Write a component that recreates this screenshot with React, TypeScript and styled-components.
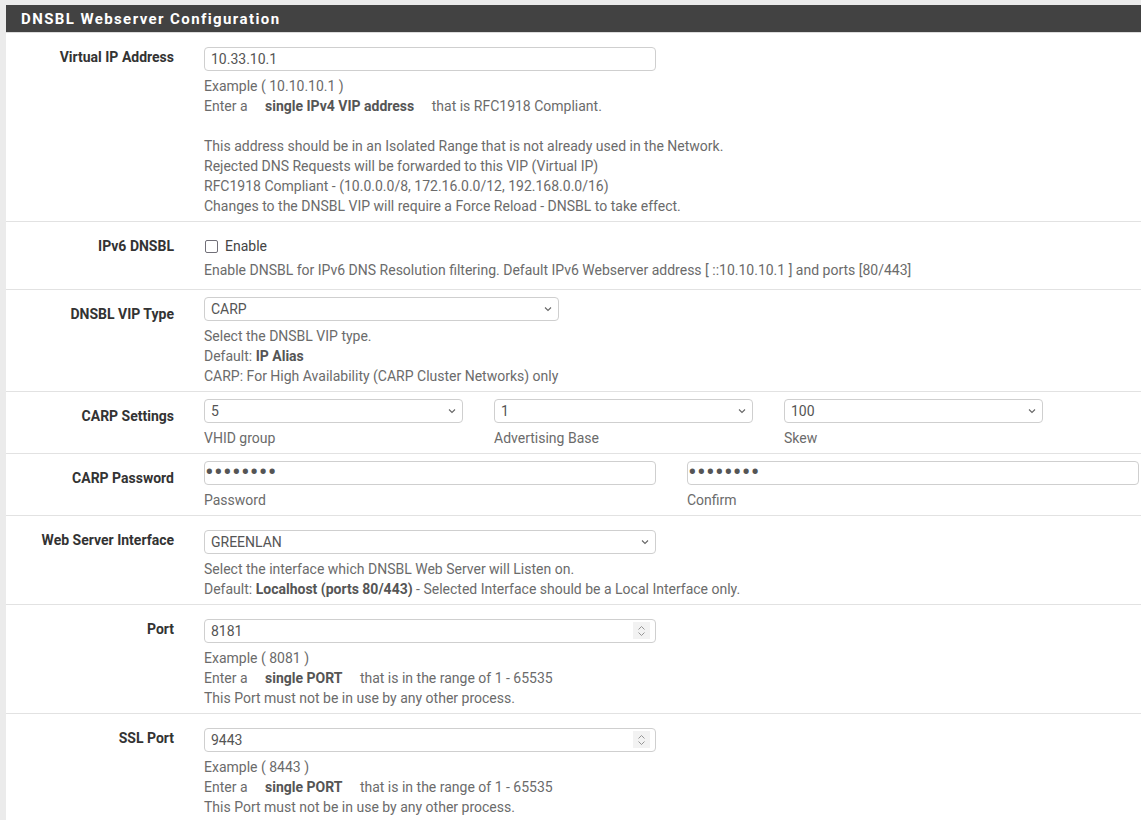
import React from "react";
import styled, { createGlobalStyle } from "styled-components";

const GlobalStyle = createGlobalStyle`
  html, body { margin: 0; padding: 0; }
  body {
    background: #ebebeb;
    font-family: Roboto, "Liberation Sans", Arial, sans-serif;
    font-size: 14px;
    color: #333;
    overflow: hidden;
  }
`;

const Page = styled.div`
  padding: 5px 0 0 6px;
`;

const Panel = styled.section`
  width: 1135px;
  background: #fff;
`;

const Heading = styled.h2`
  margin: 0;
  height: 27px;
  display: flex;
  align-items: center;
  padding-left: 15px;
  background: #424242;
  border-bottom: 1px solid #dcdcdc;
  color: #fff;
  font-size: 15px;
  font-weight: 700;
  letter-spacing: 1.4px;
`;

const Row = styled.div<{ $pb?: number }>`
  display: grid;
  grid-template-columns: 183px 1fr;
  border-bottom: 1px solid #e2e2e2;
  padding-bottom: ${(p) => p.$pb ?? 5}px;
`;

const Label = styled.div`
  padding: 14px 15px 0 0;
  text-align: right;
  font-weight: 700;
  font-size: 14px;
  line-height: 20px;
  color: #333;
`;

const Content = styled.div<{ $pt?: number }>`
  padding: ${(p) => p.$pt ?? 14}px 0 0 15px;
  min-width: 0;
`;

const Help = styled.div<{ $mt?: number }>`
  margin-top: ${(p) => p.$mt ?? 5}px;
  line-height: 20px;
  color: #6b6b6b;
  font-size: 14px;
`;

const Blank = styled.div`
  height: 20px;
`;

const Strong = styled.b`
  color: #555;
  font-weight: 700;
`;

const Spaced = styled.b`
  color: #555;
  font-weight: 700;
  margin: 0 14px;
`;

const FieldBox = styled.div<{ $w: number }>`
  position: relative;
  width: ${(p) => p.$w}px;
  height: 24px;
  box-sizing: border-box;
`;

const TextInput = styled.input`
  box-sizing: border-box;
  width: 100%;
  height: 24px;
  margin: 0;
  padding: 0 6px;
  border: 1px solid #cfcfcf;
  border-radius: 4px;
  background: #fff;
  color: #555;
  font-family: Roboto, "Liberation Sans", Arial, sans-serif;
  font-size: 14px;
  outline: none;
`;

const PasswordInput = styled(TextInput)`
  padding: 0 0 3px 0;
  font-size: 26px;
  letter-spacing: 0.2px;
  color: #555;
`;

const SelectEl = styled.select`
  box-sizing: border-box;
  width: 100%;
  height: 24px;
  margin: 0;
  padding: 0 20px 0 6px;
  border: 1px solid #cfcfcf;
  border-radius: 4px;
  background: #fff;
  color: #555;
  font-family: Roboto, "Liberation Sans", Arial, sans-serif;
  font-size: 14px;
  appearance: none;
  -webkit-appearance: none;
  outline: none;
`;

const Chevron = styled.svg`
  position: absolute;
  right: 7px;
  top: 9px;
  width: 8px;
  height: 6px;
  pointer-events: none;
`;

const Spinner = styled.div`
  position: absolute;
  right: 6px;
  top: 3px;
  width: 17px;
  height: 17px;
  background: #f2f2f2;
  display: flex;
  flex-direction: column;
  align-items: center;
  justify-content: center;
  gap: 2px;
  pointer-events: none;
`;

const Triple = styled.div`
  display: grid;
  grid-template-columns: repeat(3, 259px);
  column-gap: 31px;
`;

const Double = styled.div`
  display: grid;
  grid-template-columns: repeat(2, 452px);
  column-gap: 31px;
`;

const SubLabel = styled.div`
  margin-top: 5px;
  line-height: 20px;
  color: #6b6b6b;
  font-size: 14px;
`;

const CheckLine = styled.label`
  display: flex;
  align-items: center;
  height: 20px;
  gap: 7px;
  color: #444;
  font-size: 14px;
  padding-left: 1px;
`;

const CheckBox = styled.span`
  box-sizing: border-box;
  width: 13px;
  height: 13px;
  border: 1.5px solid #716f78;
  border-radius: 2px;
  background: #fff;
`;

const ChevronDown = () => (
  <Chevron viewBox="0 0 8 6">
    <path d="M1 1.5 L4 4.5 L7 1.5" fill="none" stroke="#666" strokeWidth="1.1" />
  </Chevron>
);

const Select = ({ w, value }: { w: number; value: string }) => (
  <FieldBox $w={w}>
    <SelectEl defaultValue={value}>
      <option value={value}>{value}</option>
    </SelectEl>
    <ChevronDown />
  </FieldBox>
);

const Input = ({ w, value }: { w: number; value: string }) => (
  <FieldBox $w={w}>
    <TextInput type="text" defaultValue={value} readOnly />
  </FieldBox>
);

const Password = ({ w }: { w: number }) => (
  <FieldBox $w={w}>
    <PasswordInput type="password" defaultValue="12345678" readOnly />
  </FieldBox>
);

const NumberInput = ({ w, value }: { w: number; value: string }) => (
  <FieldBox $w={w}>
    <TextInput type="text" defaultValue={value} readOnly />
    <Spinner>
      <svg width="7" height="4" viewBox="0 0 7 4">
        <path d="M0.5 3.5 L3.5 0.5 L6.5 3.5" fill="none" stroke="#8a8a8a" strokeWidth="0.9" />
      </svg>
      <svg width="7" height="4" viewBox="0 0 7 4">
        <path d="M0.5 0.5 L3.5 3.5 L6.5 0.5" fill="none" stroke="#8a8a8a" strokeWidth="0.9" />
      </svg>
    </Spinner>
  </FieldBox>
);

export default function App() {
  return (
    <>
      <GlobalStyle />
      <Page>
        <Panel>
          <Heading>DNSBL Webserver Configuration</Heading>

          <Row>
            <Label>Virtual IP Address</Label>
            <Content>
              <Input w={452} value="10.33.10.1" />
              <Help>
                <div>Example ( 10.10.10.1 )</div>
                <div>
                  Enter a <Spaced>single IPv4 VIP address</Spaced> that is RFC1918 Compliant.
                </div>
                <Blank />
                <div>This address should be in an Isolated Range that is not already used in the Network.</div>
                <div>Rejected DNS Requests will be forwarded to this VIP (Virtual IP)</div>
                <div>RFC1918 Compliant - (10.0.0.0/8, 172.16.0.0/12, 192.168.0.0/16)</div>
                <div>Changes to the DNSBL VIP will require a Force Reload - DNSBL to take effect.</div>
              </Help>
            </Content>
          </Row>

          <Row $pb={9}>
            <Label>IPv6 DNSBL</Label>
            <Content>
              <CheckLine>
                <CheckBox />
                Enable
              </CheckLine>
              <Help $mt={4}>
                Enable DNSBL for IPv6 DNS Resolution filtering. Default IPv6 Webserver address [ ::10.10.10.1 ] and ports [80/443]
              </Help>
            </Content>
          </Row>

          <Row>
            <Label>DNSBL VIP Type</Label>
            <Content $pt={7}>
              <Select w={355} value="CARP" />
              <Help>
                <div>Select the DNSBL VIP type.</div>
                <div>
                  Default: <Strong>IP Alias</Strong>
                </div>
                <div>CARP: For High Availability (CARP Cluster Networks) only</div>
              </Help>
            </Content>
          </Row>

          <Row>
            <Label>CARP Settings</Label>
            <Content $pt={7}>
              <Triple>
                <div>
                  <Select w={259} value="5" />
                  <SubLabel>VHID group</SubLabel>
                </div>
                <div>
                  <Select w={259} value="1" />
                  <SubLabel>Advertising Base</SubLabel>
                </div>
                <div>
                  <Select w={259} value="100" />
                  <SubLabel>Skew</SubLabel>
                </div>
              </Triple>
            </Content>
          </Row>

          <Row>
            <Label>CARP Password</Label>
            <Content $pt={7}>
              <Double>
                <div>
                  <Password w={452} />
                  <SubLabel>Password</SubLabel>
                </div>
                <div>
                  <Password w={452} />
                  <SubLabel>Confirm</SubLabel>
                </div>
              </Double>
            </Content>
          </Row>

          <Row>
            <Label>Web Server Interface</Label>
            <Content>
              <Select w={452} value="GREENLAN" />
              <Help>
                <div>Select the interface which DNSBL Web Server will Listen on.</div>
                <div>
                  Default: <Strong>Localhost (ports 80/443)</Strong> - Selected Interface should be a Local Interface only.
                </div>
              </Help>
            </Content>
          </Row>

          <Row>
            <Label>Port</Label>
            <Content>
              <NumberInput w={452} value="8181" />
              <Help>
                <div>Example ( 8081 )</div>
                <div>
                  Enter a <Spaced>single PORT</Spaced> that is in the range of 1 - 65535
                </div>
                <div>This Port must not be in use by any other process.</div>
              </Help>
            </Content>
          </Row>

          <Row>
            <Label>SSL Port</Label>
            <Content>
              <NumberInput w={452} value="9443" />
              <Help>
                <div>Example ( 8443 )</div>
                <div>
                  Enter a <Spaced>single PORT</Spaced> that is in the range of 1 - 65535
                </div>
                <div>This Port must not be in use by any other process.</div>
              </Help>
            </Content>
          </Row>
        </Panel>
      </Page>
    </>
  );
}
